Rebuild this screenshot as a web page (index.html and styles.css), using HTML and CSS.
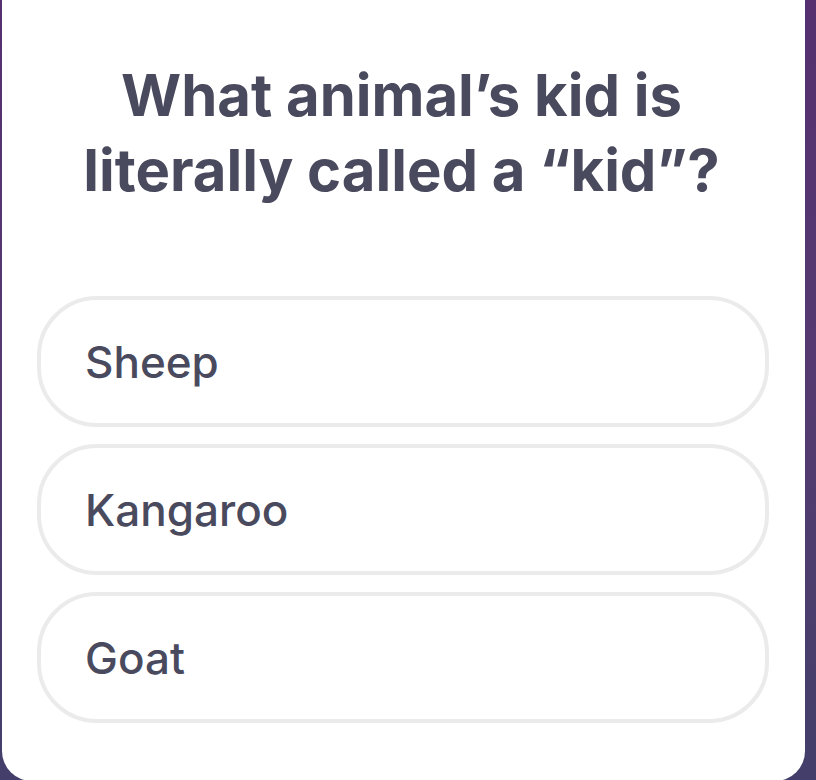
FILE: index.html
```html
<!DOCTYPE html>
<html lang="en">
<head>
<meta charset="utf-8">
<title>Quiz</title>
<link rel="stylesheet" href="styles.css">
</head>
<body>
<main class="card">
  <h1 class="question">What animal’s kid is<br>literally called a “kid”?</h1>
  <div class="options">
    <button class="option">Sheep</button>
    <button class="option">Kangaroo</button>
    <button class="option">Goat</button>
  </div>
</main>
</body>
</html>
```
FILE: styles.css
```css
html, body {
  margin: 0;
  height: 780px;
  overflow: hidden;
}
body {
  background: linear-gradient(to bottom, #56306f 0%, #553a70 50%, #433f6a 100%);
  font-family: "Inter", "Lato", sans-serif;
}
.card {
  margin-left: 2px;
  width: 803px;
  height: 781px;
  background: #ffffff;
  border-radius: 0 0 30px 30px;
  box-sizing: border-box;
  padding: 58px 36px 0 35px;
}
.question {
  margin: 0;
  text-align: center;
  color: #4a4a5e;
  font-size: 58px;
  font-weight: 700;
  line-height: 75px;
  letter-spacing: 0;
  padding-right: 3px;
}
.options {
  margin-top: 88px;
  display: flex;
  flex-direction: column;
  gap: 17px;
}
.option {
  height: 131px;
  box-sizing: border-box;
  border: 4px solid #ebebeb;
  border-radius: 60px;
  background: #fff;
  text-align: left;
  padding: 0 0 0 44px;
  font-family: inherit;
  font-size: 44px;
  font-weight: 500;
  color: #4a4a5e;
}
```
